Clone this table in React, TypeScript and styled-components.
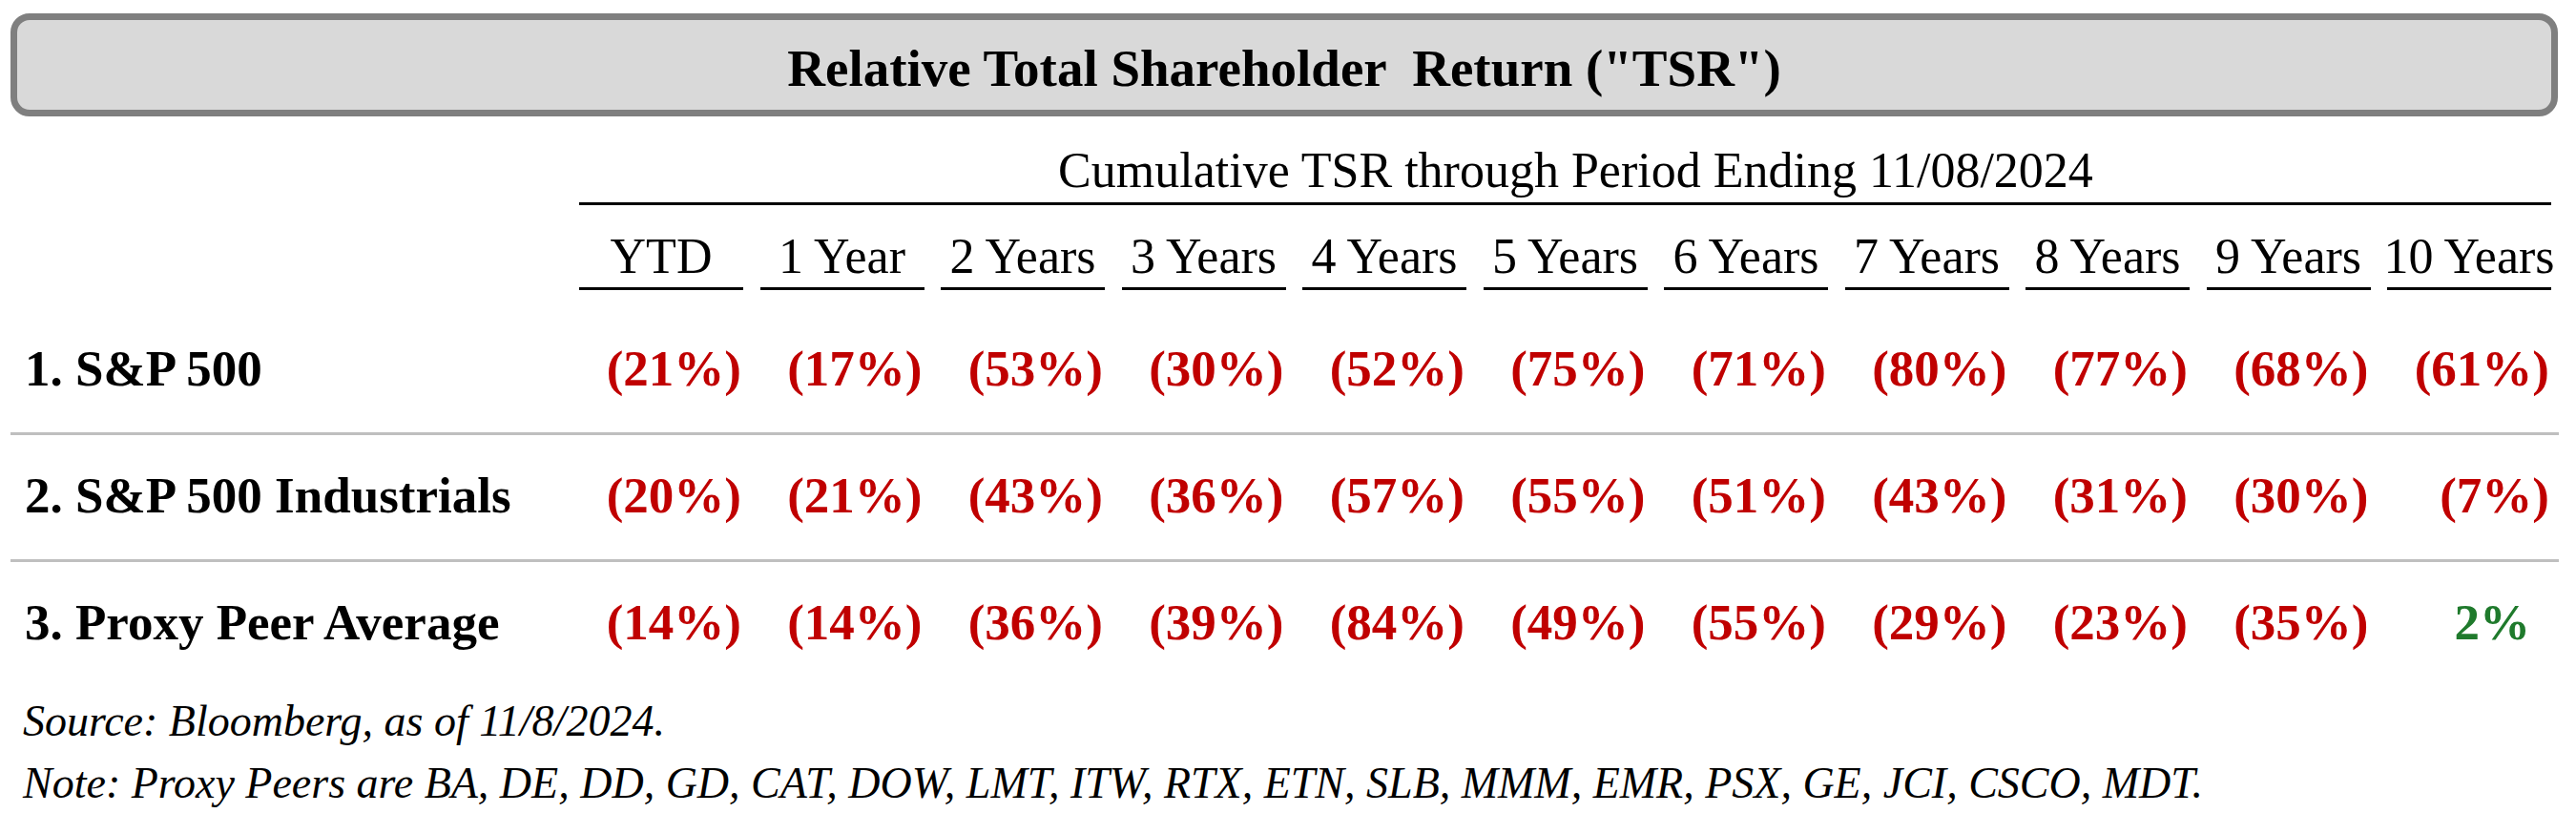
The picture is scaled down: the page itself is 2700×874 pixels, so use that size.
import styled, { createGlobalStyle } from "styled-components";

const GlobalStyle = createGlobalStyle`
  body {
    margin: 0;
    background: #ffffff;
    color: #000000;
    font-family: "Liberation Serif", "Times New Roman", serif;
  }
`;

const periods = [
  "YTD",
  "1 Year",
  "2 Years",
  "3 Years",
  "4 Years",
  "5 Years",
  "6 Years",
  "7 Years",
  "8 Years",
  "9 Years",
  "10 Years",
];

const rows = [
  { label: "1. S&P 500", values: [-21, -17, -53, -30, -52, -75, -71, -80, -77, -68, -61] },
  { label: "2. S&P 500 Industrials", values: [-20, -21, -43, -36, -57, -55, -51, -43, -31, -30, -7] },
  { label: "3. Proxy Peer Average", values: [-14, -14, -36, -39, -84, -49, -55, -29, -23, -35, 2] },
];

const COLUMNS = "578.5px repeat(11, 172px)";

const Page = styled.div`
  padding: 14px 0 0 11px;
`;

const TitleBox = styled.div`
  box-sizing: border-box;
  width: 2670px;
  height: 108px;
  padding-top: 7px;
  border: 7px solid #7f7f7f;
  border-radius: 20px;
  background: #d9d9d9;
  text-align: center;
  font-size: 55px;
  font-weight: 700;
  line-height: 87px;
  white-space: pre;
`;

const HeadGrid = styled.div`
  display: grid;
  grid-template-columns: ${COLUMNS};
  column-gap: 17.5px;
  row-gap: 24px;
  margin-top: 27px;
`;

const Subtitle = styled.div`
  grid-column: 2 / -1;
  padding: 0 0 3px 22px;
  border-bottom: 3px solid #000000;
  text-align: center;
  font-size: 52px;
  line-height: 60px;
  white-space: nowrap;
`;

const PeriodCell = styled.div`
  display: flex;
  justify-content: center;
  padding-bottom: 2px;
  border-bottom: 3px solid #000000;
  font-size: 52px;
  line-height: 60px;
  white-space: nowrap;
`;

const Body = styled.div`
  margin-top: 19px;
`;

const Row = styled.div`
  display: grid;
  grid-template-columns: ${COLUMNS};
  column-gap: 17.5px;
  width: 2671px;
  padding-bottom: 4px;
  border-bottom: 3px solid #bfbfbf;
  font-size: 53px;
  font-weight: 700;
  line-height: 126px;
  white-space: nowrap;

  &:last-child {
    border-bottom: none;
  }
`;

const Label = styled.div`
  padding-left: 15px;
`;

const Value = styled.div<{ $positive: boolean }>`
  text-align: right;
  padding-right: ${({ $positive }) => ($positive ? "22px" : "2px")};
  color: ${({ $positive }) => ($positive ? "#1f7a2c" : "#c00000")};
`;

const Notes = styled.div`
  margin-top: 4px;
  padding-left: 13px;
  font-size: 46px;
  font-style: italic;
  line-height: 65px;
  white-space: nowrap;
`;

function formatReturn(v: number) {
  return v < 0 ? `(${-v}%)` : `${v}%`;
}

export default function App() {
  return (
    <Page>
      <GlobalStyle />
      <TitleBox>Relative Total Shareholder  Return ("TSR")</TitleBox>

      <HeadGrid>
        <Subtitle>Cumulative TSR through Period Ending 11/08/2024</Subtitle>
        <div />
        {periods.map((p) => (
          <PeriodCell key={p}>{p}</PeriodCell>
        ))}
      </HeadGrid>

      <Body>
        {rows.map((r) => (
          <Row key={r.label}>
            <Label>{r.label}</Label>
            {r.values.map((v, i) => (
              <Value key={i} $positive={v >= 0}>
                {formatReturn(v)}
              </Value>
            ))}
          </Row>
        ))}
      </Body>

      <Notes>
        <div>Source: Bloomberg, as of 11/8/2024.</div>
        <div>Note: Proxy Peers are BA, DE, DD, GD, CAT, DOW, LMT, ITW, RTX, ETN, SLB, MMM, EMR, PSX, GE, JCI, CSCO, MDT.</div>
      </Notes>
    </Page>
  );
}
